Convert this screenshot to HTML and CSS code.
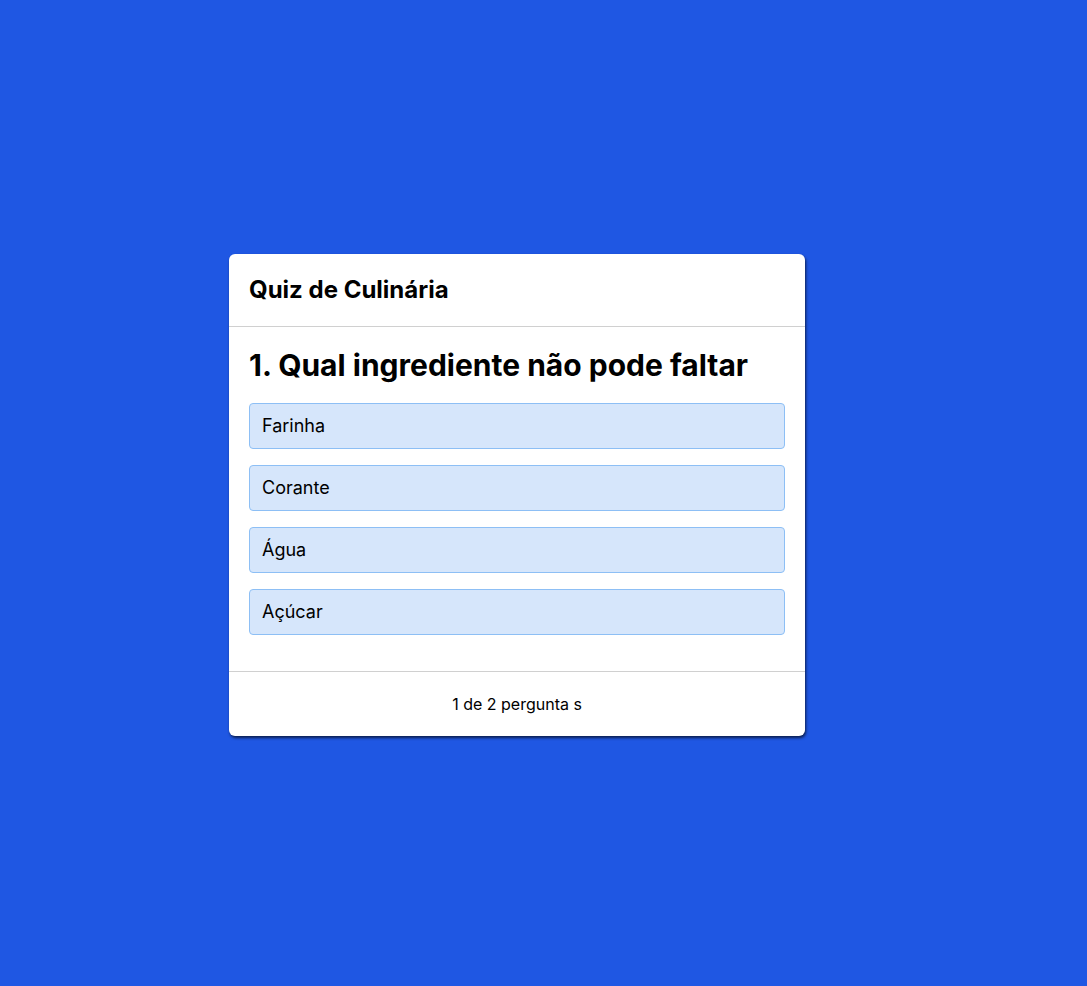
FILE: index.html
```html
<!DOCTYPE html>
<html lang="pt">
<head>
<meta charset="utf-8">
<title>Quiz de Culinária</title>
<link rel="stylesheet" href="styles.css">
</head>
<body>
<main class="page">
  <section class="card">
    <header class="card-header">
      <h1 class="title">Quiz de Culinária</h1>
    </header>
    <div class="card-body">
      <h2 class="question">1. Qual ingrediente não pode faltar</h2>
      <ul class="options">
        <li class="option">Farinha</li>
        <li class="option">Corante</li>
        <li class="option">Água</li>
        <li class="option">Açúcar</li>
      </ul>
    </div>
    <footer class="card-footer">1 de 2 pergunta s</footer>
  </section>
</main>
</body>
</html>
```
FILE: styles.css
```css
* { box-sizing: border-box; }
html, body {
  margin: 0;
  padding: 0;
}
body {
  background: #1f57e3;
  font-family: Inter, "Noto Sans", sans-serif;
  color: #000;
}
.page {
  min-height: 986px;
  display: flex;
  align-items: center;
  padding: 4px 0 0 229px;
}
.card {
  width: 576px;
  background: #fff;
  border-radius: 6px;
  box-shadow: 1px 2px 3px rgba(0, 0, 0, 0.65);
  overflow: hidden;
}
.card-header {
  padding: 20px;
  border-bottom: 1px solid #d0d0d0;
}
.title {
  margin: 0;
  font-size: 24px;
  line-height: 32px;
  font-weight: 700;
}
.card-body {
  padding: 20px 20px 20px;
}
.question {
  margin: 0 0 20px;
  font-size: 30px;
  line-height: 36px;
  font-weight: 700;
}
.options {
  list-style: none;
  margin: 0;
  padding: 0;
  display: flex;
  flex-direction: column;
  gap: 16px;
  padding-bottom: 16px;
}
.option {
  background: #d6e6fb;
  border: 1px solid #8dbff5;
  border-radius: 4px;
  padding: 10px 12px;
  font-size: 18px;
  line-height: 24px;
}
.card-footer {
  border-top: 1px solid #d0d0d0;
  padding: 20px;
  text-align: center;
  font-size: 16px;
  line-height: 24px;
}
```
